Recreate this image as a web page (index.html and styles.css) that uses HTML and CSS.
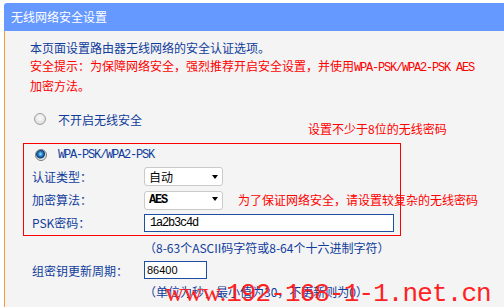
FILE: index.html
```html
<!DOCTYPE html>
<html>
<head>
    <meta charset="UTF-8">
    <title>无线网络安全设置</title>
    <link rel="stylesheet" href="styles.css">
</head>
<body>
    <div class="panel">
        <div class="panel-head">无线网络安全设置</div>
        <div class="panel-body">
            <p class="intro">本页面设置路由器无线网络的安全认证选项。<br><span class="warn">安全提示：为保障网络安全，强烈推荐开启安全设置，并使用<span class="mono">WPA-PSK/WPA2-PSK AES</span>加密方法。</span></p>

            <label class="choice"><input type="radio" name="sec">不开启无线安全</label>

            <div class="wpa-box">
                <label class="choice"><input type="radio" name="sec" checked><span class="mono">WPA-PSK/WPA2-PSK</span></label>
                <div class="field">
                    <span class="field-name">认证类型：</span>
                    <span class="select"><select><option>自动</option></select></span>
                </div>
                <div class="field">
                    <span class="field-name">加密算法：</span>
                    <span class="select"><select class="mono"><option>AES</option></select></span>
                </div>
                <div class="field">
                    <span class="field-name">PSK密码：</span>
                    <input type="text" class="text-input psk mono" value="1a2b3c4d">
                </div>
            </div>

            <div class="hint">（8-63个ASCII码字符或8-64个十六进制字符）</div>

            <div class="field group-key">
                <span class="field-name">组密钥更新周期：</span>
                <input type="text" class="text-input period" value="86400">
            </div>
            <div class="hint">（单位为秒，最小值为30，不更新则为0）</div>

            <!-- 图上的红色标注 -->
            <span class="note note-len">设置不少于8位的无线密码</span>
            <span class="note note-strong">为了保证网络安全，请设置较复杂的无线密码</span>
            <span class="watermark"><span class="wm-www">www.</span>192-168-1-1.net.cn</span>
        </div>
    </div>
</body>
</html>
```

FILE: styles.css
```css
body {
    margin: 0;
    background-color: #fff;
    color: #103c9c;
    font-family: "Noto Sans CJK SC", sans-serif;
    font-size: 12px;
    overflow: hidden;
}
.panel {
    margin: 3px 0 0 4px;
}
.panel-head {
    height: 28px;
    line-height: 28px;
    padding-left: 7px;
    background-color: #6699ff;
    color: #fff;
    border-radius: 3px 0 0 0;
}
.panel-body {
    position: relative;
    min-height: 280px;
    padding: 8px 0 0 25px;
    background-color: #f4f4f4;
    border-left: 1px solid #ff9933;
}
.intro {
    margin: 0;
    width: 450px;
    line-height: 18px;
}
.warn {
    color: #ff0000;
}
.mono {
    font-family: "Liberation Mono", monospace;
    font-size: 12px;
    letter-spacing: -1.2px;
}

/* 单选项 */
.choice {
    display: flex;
    align-items: center;
    gap: 12px;
    height: 20px;
    margin-top: 14px;
    padding-left: 4px;
}
.choice input {
    appearance: none;
    margin: 0;
    width: 12px;
    height: 12px;
    border: 1px solid #a0a0a0;
    border-radius: 50%;
    background: radial-gradient(circle at 50% 40%, #fff, #d0d0d0);
}
.choice input:checked {
    border-color: #7a7a7a;
    background: radial-gradient(circle at 45% 40%, #a8e8ff 0, #2a8ad0 2px, #0b3c78 4px, #e6e6e6 5px);
}

.wpa-box {
    box-sizing: border-box;
    width: 378px;
    margin: 14px 0 0 -7px;
    padding: 0 0 1px 8px;
    border: 1px solid #ff0000;
}
.wpa-box .choice {
    gap: 11px;
    height: 21px;
    margin-top: 0;
    padding-left: 3px;
}

.field {
    display: flex;
    align-items: center;
    height: 23px;
}
.field-name {
    width: 112px;
}
.select {
    position: relative;
    display: inline-block;
}
.select select {
    appearance: none;
    box-sizing: border-box;
    width: 79px;
    height: 19px;
    margin: 0;
    padding: 0 0 0 4px;
    border: 1px solid #cacaca;
    border-radius: 3px;
    background-color: #fff;
    color: #000;
    font-family: "Noto Sans CJK SC", sans-serif;
    font-size: 12px;
}
.select select.mono {
    font-family: "Liberation Mono", monospace;
    font-size: 12px;
    font-weight: bold;
}
.select::after {
    content: "";
    position: absolute;
    right: 5px;
    top: 8px;
    border-left: 3.5px solid transparent;
    border-right: 3.5px solid transparent;
    border-top: 4px solid #000;
}
.text-input {
    box-sizing: border-box;
    height: 18px;
    margin: 0;
    border: 1px solid #1e4ea0;
    background-color: #fff;
    color: #000;
}
.psk {
    width: 250px;
    padding: 0 0 0 5px;
}
.period {
    width: 63px;
    padding: 0 0 0 2px;
    font-family: "Liberation Sans", sans-serif;
    font-size: 11px;
}

.hint {
    height: 20px;
    line-height: 20px;
    padding-left: 114px;
}
.wpa-box + .hint {
    margin-top: 2px;
}
.group-key {
    height: 24px;
    padding-left: 2px;
}

/* 标注与水印 */
.note {
    position: absolute;
    color: #ff0000;
    line-height: 16px;
    white-space: nowrap;
}
.note-len {
    left: 303px;
    top: 90px;
}
.note-strong {
    left: 233px;
    top: 161px;
}
.watermark {
    position: absolute;
    left: 160px;
    top: 249px;
    color: #ff2222;
    font-family: "Liberation Mono", monospace;
    font-size: 26px;
    line-height: 26px;
    letter-spacing: -0.9px;
    white-space: nowrap;
}
.wm-www {
    font-family: "Liberation Serif", serif;
    letter-spacing: 0;
}
```
